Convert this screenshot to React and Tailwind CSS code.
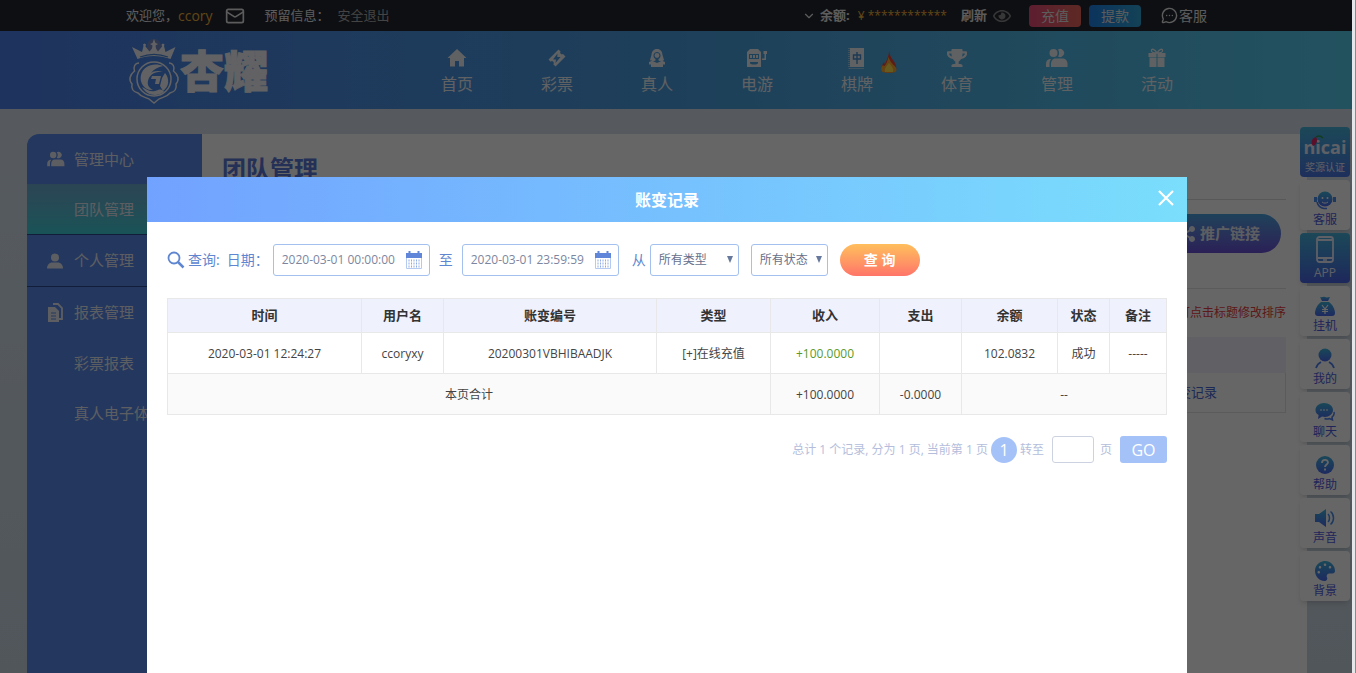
import {
  FaTrophy,
  FaRegEye,
  FaShareAlt,
  FaPalette,
} from "react-icons/fa";
import { ChevronDown, Mail, MessageCircleMore } from "lucide-react";

const navItems = [
  { label: "首页", icon: "home" },
  { label: "彩票", icon: "ticket" },
  { label: "真人", icon: "dealer" },
  { label: "电游", icon: "slot" },
  { label: "棋牌", icon: "tile", hot: true },
  { label: "体育", icon: "trophy" },
  { label: "管理", icon: "people" },
  { label: "活动", icon: "gift" },
];

const tools = [
  { label: "客服", icon: "service" },
  { label: "APP", icon: "phone", dark: true },
  { label: "挂机", icon: "bag" },
  { label: "我的", icon: "me" },
  { label: "聊天", icon: "chat" },
  { label: "帮助", icon: "help" },
  { label: "声音", icon: "sound" },
  { label: "背景", icon: "palette" },
];

const columns = [
  { title: "时间", width: "w-[194px]" },
  { title: "用户名", width: "w-[82px]" },
  { title: "账变编号", width: "w-[213px]" },
  { title: "类型", width: "w-[114px]" },
  { title: "收入", width: "w-[109px]" },
  { title: "支出", width: "w-[82px]" },
  { title: "余额", width: "w-[96px]" },
  { title: "状态", width: "w-[52px]" },
  { title: "备注", width: "w-[57px]" },
];

const records = [
  {
    time: "2020-03-01 12:24:27",
    user: "ccoryxy",
    no: "20200301VBHIBAADJK",
    type: "[+]在线充值",
    income: "+100.0000",
    expense: "",
    balance: "102.0832",
    status: "成功",
    remark: "-----",
  },
];

function People({ className }) {
  return (
    <svg viewBox="0 0 22 20" className={className} fill="currentColor">
      <circle cx="7.5" cy="5" r="4" />
      <path d="M12 1.6a4 4 0 1 1 0 6.8 6 6 0 0 0 0-6.800z" />
      <path d="M4 11C1.500 11.500 0 13 0 16v3h3.500v-3c0-2 .5-3.500 1.500-5z" />
      <path d="M9.500 10.500h7c3.500 0 5 2.500 5 5.500v3H5v-3c0-3 1.500-5.500 4.500-5.500z" />
    </svg>
  );
}

function NavIcon({ name }) {
  switch (name) {
    case "home":
      return (
        <svg viewBox="0 0 20 20" className="size-5" fill="currentColor">
          <path d="M10 1l9.500 9H17v8.500h-5v-5.500H8v5.500H3V10H.5z" />
        </svg>
      );
    case "ticket":
      return (
        <svg viewBox="0 0 20 20" className="size-5" fill="currentColor">
          <path
            fillRule="evenodd"
            d="M11.500 1.500l2 2a1.800 1.800 0 0 0 2.500 2.500l2.500 2.500-10 10-2.200-2.200a1.800 1.800 0 0 0-2.600-2.600L1.500 11.500zM10.500 5.500l-4.500 6h3l-.5 3.500 5-6h-3.200z"
          />
        </svg>
      );
    case "dealer":
      return (
        <svg viewBox="0 0 20 20" className="size-5" fill="currentColor">
          <path
            fillRule="evenodd"
            d="M10 1C6.500 1 4.700 3.500 4.500 7L3 12c1.500 1.500 4 1.500 5.500.5V11C6.800 10 6.300 8.500 6.500 7c.2-1.500 1.600-3 3.500-3s3.300 1.500 3.500 3c.2 1.500-.3 3-2 4v1.500c1.500 1 4 1 5.500-.5l-1.500-5C15.300 3.500 13.500 1 10 1z"
          />
          <circle cx="10" cy="7.500" r="2.400" />
          <path d="M2 14l3-1.300L10 15l5-2.300 3 1.300v2.500h-2V19H4v-2.500H2z" />
        </svg>
      );
    case "slot":
      return (
        <svg viewBox="0 0 22 20" className="h-5 w-[22px]" fill="currentColor">
          <path
            fillRule="evenodd"
            d="M4 1h8l3 3v15H1V4zM3 6v5h10V6zm1 8v1.500l2 1h4l2-1V14z"
          />
          <path d="M4 7h2v3H4zM7 7h2v3H7zM10 7h2v3h-2z" />
          <path d="M16 12v-1.500h2.500V6h-1V3h3.500v3h-1v6z" />
        </svg>
      );
    case "tile":
      return (
        <svg viewBox="0 0 18 22" className="h-[22px] w-[18px]">
          <path d="M2 1h14v19H2z" fill="currentColor" />
          <path d="M1 1v20.500h15.500" stroke="currentColor" fill="none" strokeDasharray="1 1" />
          <path d="M5.500 8h7v4h-7zM9 5v12" stroke="#4b8fd0" strokeWidth="1.400" fill="none" />
        </svg>
      );
    case "trophy":
      return <FaTrophy className="size-5" />;
    case "people":
      return <People className="h-5 w-[22px]" />;
    default:
      return (
        <svg viewBox="0 0 20 20" className="size-5" fill="currentColor">
          <path d="M1.500 5h8v4h-8zM10.500 5h8v4h-8zM2.500 9.500h7V19h-7zM10.500 9.500h7V19h-7z" />
          <path
            d="M10 5C8 1 4 0 4.500 3c.2 1.500 3 2 5.500 2zM10 5c2-4 6-5 5.500-2-.2 1.500-3 2-5.500 2z"
            fill="none"
            stroke="currentColor"
            strokeWidth="1.300"
          />
        </svg>
      );
  }
}

function Flame() {
  return (
    <svg viewBox="0 0 16 22" className="h-[22px] w-4">
      <path d="M8 0c1 4 1.500 6 4 9s4 7 3 10c-1 2-4 3-7 3s-6-1-7-3c-1-3 .5-5 2-8 .6 1 1 2 1 3C5 9 8 6 8 0z" fill="#e8453c" />
      <path d="M7.500 6c1 3 3 6 5 8 3 2 4 5 2 7-3 1-10 1-13 0-2-2-1.500-5 .5-7 .5 1 1 1 1.500 1 2-2 3-5 4-9z" fill="#ffa82e" />
      <path d="M8 12c2 3 5 5 4 9H4c-1-4 2-6 4-9z" fill="#ffe14d" />
    </svg>
  );
}

function Logo() {
  return (
    <a href="#" className="flex items-center text-[#f4f6fa]">
      <svg viewBox="0 0 52 66" className="h-[66px] w-[52px] shrink-0">
        <circle cx="26" cy="8" r="7" fill="#ff9a6a" opacity=".25" />
        {/* crown */}
        <path
          d="M26 1l1.500 4 2.500 1-2.500 1.500.5 3 2 3 4-5-.500-2 1.500-1 1.500 1-.5 1.500 1.500 6 10-5-5 12c-11-4-23-4-33 0L4 9l10 5 1.500-6-.5-1.500 1.500-1 1.500 1-.5 2 4 5 2.500-3 .5-3L22 6l2.500-1z"
          fill="currentColor"
        />
        <path d="M12 19c9-3.500 19-3.500 28 0" stroke="#4b87d8" strokeWidth="1.300" fill="none" />
        {/* frame */}
        <path
          d="M11 25c-4 0-6 4-4.500 8-5 4-6 9-2.500 13-1 5 2 8 6 9 4 5 8 4 11 6l5 4 5-4c3-2 7-1 11-6 4-1 7-4 6-9 3.500-4 2.500-9-2.500-13C47 29 45 25 41 25"
          fill="none"
          stroke="currentColor"
          strokeWidth="1.500"
        />
        <circle cx="26" cy="41" r="17" fill="none" stroke="currentColor" strokeWidth="1.500" />
        {/* emblem */}
        <path
          d="M35 28c-9-4-20 0-22 9-2 8 4 16 12 15-4-2-6-5-5-9 1-6 7-10 15-9-4-2-10-1-12 1 3-4 7-6 12-7z"
          fill="currentColor"
        />
        <path d="M24 38h9l-2 8h-4l1-5h-5zM37 35c5 6 4 14-2 18l-3-5 2-8z" fill="currentColor" />
        <path d="M14 49c6 3 9 6 16 3 3-1 5 0 6 2-7 5-17 4-22-5z" fill="currentColor" />
      </svg>
      <span className="text-[44px] leading-[44px] font-black [-webkit-text-stroke:1px_currentColor]">杏耀</span>
    </a>
  );
}

function ToolIcon({ name }) {
  const paint = "url(#toolPaint)";
  switch (name) {
    case "service":
      return (
        <svg viewBox="0 0 22 20" className="h-5 w-[22px]">
          <circle cx="11" cy="9" r="7.500" fill={paint} />
          <path d="M0 7h3v5H0zM19 7h3v5h-3z" fill="#4b8ff0" />
          <circle cx="8.500" cy="8" r="1" fill="#fff" />
          <circle cx="13.500" cy="8" r="1" fill="#fff" />
          <path d="M8 12c2 1.500 4 1.500 6 0" stroke="#fff" fill="none" />
          <path d="M3 12c1 4 4 6 7 6.500h3" stroke="#4b7ff0" strokeWidth="1.500" fill="none" />
        </svg>
      );
    case "phone":
      return (
        <svg viewBox="0 0 18 27" className="h-[27px] w-[18px]" fill="none" stroke="currentColor">
          <rect x="1" y="1" width="16" height="25" rx="2.500" strokeWidth="1.800" />
          <path d="M1.500 4h15M1.500 22h15" strokeWidth="1.800" />
          <path d="M7 24h4" strokeWidth="1.500" />
        </svg>
      );
    case "bag":
      return (
        <svg viewBox="0 0 20 20" className="size-5">
          <path d="M5 1c2 1 3-1 5 0s3 0 5 0l-2 4H7z" fill={paint} />
          <path d="M6 6h8c3 2 6 7 6 11 0 2-1 3-3 3H3c-2 0-3-1-3-3 0-4 3-9 6-11z" fill={paint} />
          <path d="M7 9l3 4 3-4M10 13v5M7 13.500h6M7 15.500h6" stroke="#fff" strokeWidth="1.200" fill="none" />
        </svg>
      );
    case "me":
      return (
        <svg viewBox="0 0 20 21" className="h-[21px] w-5">
          <circle cx="10" cy="7" r="6.500" fill={paint} />
          <path d="M1 20c1-3 3-5 5-6M19 20c-1-3-3-5-5-6" stroke="#4b7ff0" strokeWidth="1.800" fill="none" />
        </svg>
      );
    case "chat":
      return (
        <svg viewBox="0 0 20 20" className="size-5">
          <path d="M9 1c5 0 9 3 9 7s-4 7-8 7c-1 0-2 0-3-.4L3 17l.6-4C1.500 12 .5 10 .5 8c0-4 4-7 8.500-7z" fill={paint} />
          <path d="M5 8h8" stroke="#fff" strokeDasharray="2 1" />
          <path d="M19 10c.5 2-.5 4-2 5l.5 3-3-1.500c-2 .8-4 .5-5 0" stroke="#4b7ff0" strokeWidth="1.500" fill="none" />
        </svg>
      );
    case "help":
      return (
        <svg viewBox="0 0 20 20" className="size-5">
          <circle cx="10" cy="10" r="9" fill={paint} />
          <path d="M7 8c0-4 6-4 6-.5 0 2-3 2-3 4.500M10 13.500v2" stroke="#fff" strokeWidth="1.800" fill="none" />
        </svg>
      );
    case "sound":
      return (
        <svg viewBox="0 0 20 20" className="size-5">
          <path d="M0 6h4l7-5v18l-7-5H0z" fill={paint} />
          <path d="M13 6c2 2 2 6 0 8M15.500 3.500c4 3 4 10 0 13" stroke="#4b8ff0" strokeWidth="1.500" fill="none" />
        </svg>
      );
    default:
      return <FaPalette className="size-5" fill={paint} />;
  }
}

function CalendarIcon() {
  return (
    <svg viewBox="0 0 16 18" className="h-[18px] w-4 shrink-0">
      <path d="M0 2h16v5H0zM2.500 0h2v3h-2zM11.500 0h2v3h-2z" fill="#5f86d8" />
      <path d="M.5 7v10.500h15V7" fill="#fff" stroke="#b4caf0" />
      <path d="M3 8.500v8M5.500 8.500v8M8 8.500v8M10.500 8.500v8M13 8.500v8" stroke="#8fabe4" strokeDasharray="2 1" />
    </svg>
  );
}

function TopBar() {
  return (
    <div className="flex h-[31px] items-center bg-[#24272f] pl-[126px] text-sm text-[#e6e6e6]">
      <span className="text-[13px]">欢迎您，</span>
      <a href="#" className="text-[#f0ae3c]">ccory</a>
      <Mail className="ml-3 size-5" strokeWidth={2} />
      <span className="ml-5 text-[13px]">预留信息：</span>
      <a href="#" className="ml-2 text-[13px] text-[#aaa]">安全退出</a>

      <div className="ml-auto flex items-center pr-[149px] text-[13px]">
        <ChevronDown className="size-3.5" />
        <span className="ml-1 font-bold">余额:</span>
        <span className="ml-2 text-xs text-[#f0ae3c]">¥ ************</span>
        <a href="#" className="ml-3.5 font-bold">刷新</a>
        <FaRegEye className="ml-1.5 size-[18px] text-[#8a8a8a]" />
        <button className="ml-[18px] h-[22px] w-[52px] rounded bg-linear-to-r from-[#e94b78] to-[#e9665a] text-sm">充值</button>
        <button className="ml-2 h-[22px] w-[52px] rounded bg-linear-to-r from-[#1e80e8] to-[#32a4d8] text-sm">提款</button>
        <a href="#" className="ml-5 flex items-center text-sm">
          <MessageCircleMore className="mr-px size-[17px]" />
          客服
        </a>
      </div>
    </div>
  );
}

function Header() {
  return (
    <div className="flex h-[78px] bg-linear-to-r from-[#4b80ea] via-[#4b9fe0] to-[#58cdee]">
      <div className="flex w-[407px] shrink-0 items-center pt-0.5 pl-32">
        <Logo />
      </div>
      <nav className="flex">
        {navItems.map((item) => (
          <a
            key={item.label}
            href="#"
            className="relative flex w-[100px] flex-col items-center pt-4 text-base text-[#f0f3f8]"
          >
            <span className="flex h-[22px] items-center">
              <NavIcon name={item.icon} />
            </span>
            <span className="leading-[30px]">{item.label}</span>
            {item.hot && (
              <span className="absolute top-5 right-[10px]">
                <Flame />
              </span>
            )}
          </a>
        ))}
      </nav>
    </div>
  );
}

function Sidebar() {
  return (
    <aside className="w-[175px] shrink-0 rounded-tl-xl bg-[#5a89ea] text-[15px] text-[#e8ecf4]">
      <a href="#" className="flex h-[50px] items-center pl-5">
        <People className="mr-[9px] h-4 w-[18px]" />
        管理中心
      </a>
      <a href="#" className="flex h-[51px] items-center border-b border-[#2c4a90] bg-linear-to-b from-[#6cabd2] to-[#3dd0da] pl-[47px]">
        团队管理
      </a>
      <a href="#" className="flex h-[52px] items-center border-b border-[#2c4a90] pl-5">
        <svg viewBox="0 0 18 16" className="mr-[9px] h-4 w-[18px]" fill="currentColor">
          <circle cx="8" cy="4.500" r="4" />
          <path d="M0 15.500c0-4 3-6 5-6h6c2 0 5 2 5 6z" />
        </svg>
        个人管理
      </a>
      <a href="#" className="flex h-[51px] items-center pl-5">
        <svg viewBox="0 0 18 19" className="mr-[9px] h-[19px] w-[18px]">
          <path d="M6 1h5l4 4v11h-3" fill="none" stroke="currentColor" strokeWidth="1.800" />
          <path d="M1 4h7l4 4v11H1z" fill="currentColor" />
          <path d="M4 10h5M4 13h5M4 16h5" stroke="#5a89ea" strokeWidth="1.200" />
        </svg>
        报表管理
      </a>
      <a href="#" className="flex h-[50px] items-center pl-[47px]">彩票报表</a>
      <a href="#" className="flex h-[50px] items-center pl-[47px] whitespace-nowrap">真人电子体育</a>
    </aside>
  );
}

function TeamPanel() {
  return (
    <section className="flex-1 bg-white pr-[21px] pl-5">
      <h1 className="border-b border-[#ddd] pt-[17px] pb-3 text-2xl leading-9 font-bold text-[#5a78d8]">团队管理</h1>
      <div className="flex justify-end border-b border-[#e4e4e4] pt-3.5 pr-[5px] pb-[35px]">
        <button className="flex h-[39px] items-center gap-1 rounded-full bg-linear-to-b from-[#4ba4e0] to-[#6a50d8] pr-[21px] pl-8 text-[15px] font-bold text-[#e8ecf4]">
          <FaShareAlt className="size-4" />
          推广链接
        </button>
      </div>
      <p className="py-[14px] text-right text-xs leading-5 text-[#e84040]">可点击标题修改排序</p>
      <div className="h-9 bg-[#eff1fc]"></div>
      <div className="flex h-10 items-center justify-end border border-t-0 border-[#e4e4e4] pr-[68px]">
        <a href="#" className="text-[13px] text-[#4668d8]">账变记录</a>
      </div>
    </section>
  );
}

function ToolBar() {
  return (
    <div className="absolute top-[127px] right-1.5 flex w-[50px] flex-col gap-[3px] text-xs">
      <svg width="0" height="0" className="absolute">
        <linearGradient id="toolPaint" x1="0" y1="0" x2="0" y2="1">
          <stop offset="0" stopColor="#3fb4dc" />
          <stop offset="1" stopColor="#4b6af0" />
        </linearGradient>
      </svg>
      <a href="#" className="relative flex h-[50px] flex-col items-center justify-end rounded bg-linear-to-b from-[#46b4dc] to-[#4a76e4] text-[#eef]">
        <span className="text-lg leading-5 font-bold">nicai</span>
        <span className="text-[10px] leading-5">奖源认证</span>
        <svg viewBox="0 0 14 12" className="absolute top-2 left-2.5 h-3 w-3.5">
          <path d="M3 11C0 7 2 3 6 2c2 3 1 7-3 9z" fill="#e02868" />
          <path d="M6 2c3-2 5-1 7 1" stroke="#2e9a50" strokeWidth="1.500" fill="none" />
        </svg>
      </a>
      {tools.map((tool) => (
        <a
          key={tool.label}
          href="#"
          className={`flex h-[50px] flex-col items-center justify-end rounded shadow-md ${
            tool.dark
              ? "bg-linear-to-b from-[#46b4dc] to-[#4a62e4] text-[#eef]"
              : "bg-white text-[#4f5ce0]"
          }`}
        >
          <ToolIcon name={tool.icon} />
          <span className="leading-5">{tool.label}</span>
        </a>
      ))}
    </div>
  );
}

function RecordTable() {
  const cell = "border border-[#e8e8e8] text-center";
  const bodyCell = `${cell} pt-0.5`;

  return (
    <table className="w-full table-fixed border-collapse text-xs text-[#444]">
      <thead className="bg-[#eff1fc] text-[13px] text-[#333]">
        <tr className="h-[34px]">
          {columns.map((col) => (
            <th key={col.title} className={`${cell} ${col.width}`}>{col.title}</th>
          ))}
        </tr>
      </thead>
      <tbody>
        {records.map((row) => (
          <tr key={row.no} className="h-[41px]">
            <td className={bodyCell}>{row.time}</td>
            <td className={bodyCell}>{row.user}</td>
            <td className={bodyCell}>{row.no}</td>
            <td className={bodyCell}>{row.type}</td>
            <td className={`${bodyCell} text-[#5a9a28]`}>{row.income}</td>
            <td className={bodyCell}>{row.expense}</td>
            <td className={bodyCell}>{row.balance}</td>
            <td className={bodyCell}>{row.status}</td>
            <td className={bodyCell}>{row.remark}</td>
          </tr>
        ))}
        <tr className="h-[41px] bg-[#fafafa]">
          <td colSpan={4} className={bodyCell}>本页合计</td>
          <td className={bodyCell}>+100.0000</td>
          <td className={bodyCell}>-0.0000</td>
          <td colSpan={3} className={bodyCell}>--</td>
        </tr>
      </tbody>
    </table>
  );
}

function DateField({ label, value }) {
  return (
    <span className="flex h-8 w-[157px] items-center rounded-[3px] border border-[#a3c0ee] pr-[7px] pl-2">
      <input
        aria-label={label}
        defaultValue={value}
        className="w-full min-w-0 text-xs text-[#7c86a0] outline-none"
      />
      <CalendarIcon />
    </span>
  );
}

function SelectField({ label, option, className }) {
  return (
    <span className={`relative ${className}`}>
      <select
        aria-label={label}
        className="h-8 w-full appearance-none rounded-[3px] border border-[#a3c0ee] pl-2 text-xs text-[#66708c]"
      >
        <option>{option}</option>
      </select>
      <svg viewBox="0 0 6 7" className="pointer-events-none absolute top-3 right-1.5 h-[7px] w-1.5" fill="#66789c">
        <path d="M0 0h6L3 7z" />
      </svg>
    </span>
  );
}

function RecordDialog() {
  return (
    <div role="dialog" aria-label="账变记录" className="mt-[177px] mr-[169px] ml-[147px] flex-1 bg-white">
      <div className="relative flex h-[45px] items-center justify-center bg-linear-to-r from-[#72a2ff] to-[#7adefc] text-base font-bold text-white">
        账变记录
        <button aria-label="关闭" className="absolute top-3 right-3">
          <svg viewBox="0 0 18 18" className="size-[18px]" stroke="currentColor" strokeWidth="2.200">
            <path d="M2 2l14 14M16 2L2 16" />
          </svg>
        </button>
      </div>

      <div className="px-5 pt-[22px]">
        <form className="flex items-center text-sm text-[#5f86d0]">
          <svg viewBox="0 0 18 18" className="mr-[3px] size-[18px]" fill="none" stroke="currentColor">
            <circle cx="7" cy="7" r="5.500" strokeWidth="1.800" />
            <path d="M11 11l5.500 5.500" strokeWidth="2.500" />
          </svg>
          <span className="mr-[7px]">查询:</span>
          <span className="mr-1 w-[42px] whitespace-nowrap">日期：</span>
          <DateField label="开始日期" value="2020-03-01 00:00:00" />
          <span className="mx-[9px]">至</span>
          <DateField label="结束日期" value="2020-03-01 23:59:59" />
          <span className="mr-1 ml-[13px]">从</span>
          <SelectField label="类型" option="所有类型" className="w-[89px]" />
          <SelectField label="状态" option="所有状态" className="ml-3 w-[77px]" />
          <button
            type="button"
            className="ml-3 h-8 w-20 rounded-full bg-linear-to-b from-[#ffbe5c] to-[#ff7468] text-sm font-bold text-white"
          >
            查 询
          </button>
        </form>

        <div className="mt-[22px]">
          <RecordTable />
        </div>

        <div className="mt-[21px] flex items-center justify-end text-xs text-[#b4bedc]">
          总计 1 个记录, 分为 1 页, 当前第 1 页
          <a href="#" className="mx-[3px] flex size-[26px] items-center justify-center rounded-full bg-[#a4c2f8] text-base text-white">1</a>
          <label htmlFor="page">转至</label>
          <input id="page" className="mr-1.5 ml-2 h-[27px] w-[42px] rounded-[3px] border border-[#ccd2e0] text-center" />
          页
          <button className="ml-2 h-[27px] w-[47px] rounded-[3px] bg-[#a4c2f8] text-base text-white">GO</button>
        </div>
      </div>
    </div>
  );
}

export default function App() {
  return (
    <div className="relative flex min-h-screen flex-col overflow-hidden bg-linear-to-b from-[#dae4ee] to-[#cad8e4] font-['Open_Sans','Noto_Sans_CJK_SC',sans-serif]">
      <TopBar />
      <Header />
      <main className="mt-[25px] mr-[49px] ml-[27px] flex flex-1">
        <Sidebar />
        <TeamPanel />
      </main>
      <ToolBar />

      <div className="absolute inset-0 flex bg-black/60">
        <RecordDialog />
      </div>
      <div className="absolute inset-y-0 right-0 w-1 border-r border-[#8a8a8a] bg-[#e4e6ea]"></div>
    </div>
  );
}
